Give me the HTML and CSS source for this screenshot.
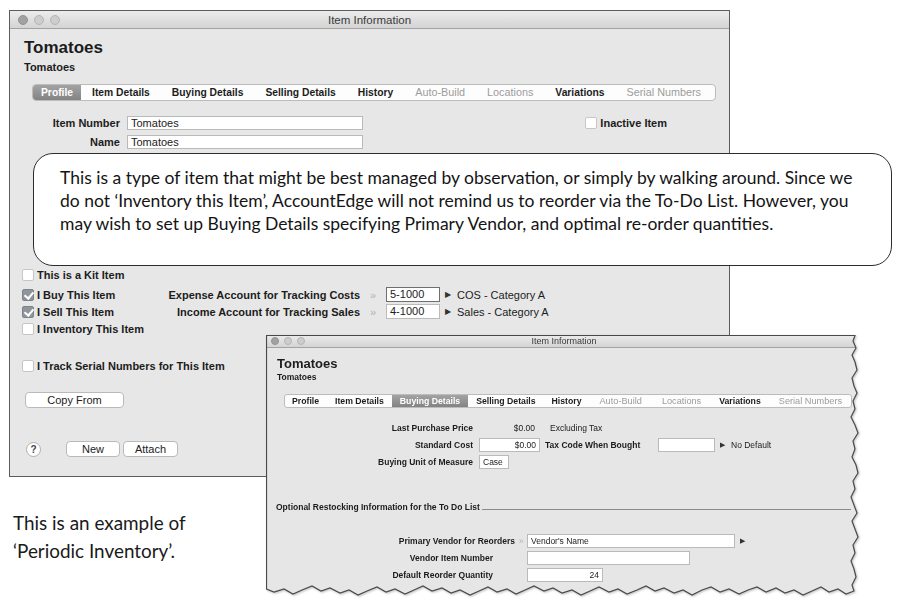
FILE: index.html
```html
<!DOCTYPE html>
<html lang="en">
<head>
    <meta charset="UTF-8">
    <title>Item Information</title>
    <link rel="stylesheet" href="styles.css">
</head>
<body>
<div class="page">
    <!--item window, profile tab-->
    <div class="win">
        <div class="titlebar">
            <div class="lights"><i></i><i></i><i></i></div>
            <div class="title">Item Information</div>
            <div></div>
        </div>
        <div class="win-body">
            <h1>Tomatoes</h1>
            <h2>Tomatoes</h2>
            <ul class="tabs">
                <li class="on">Profile</li>
                <li>Item Details</li>
                <li>Buying Details</li>
                <li>Selling Details</li>
                <li>History</li>
                <li class="off">Auto-Build</li>
                <li class="off">Locations</li>
                <li>Variations</li>
                <li class="off">Serial Numbers</li>
            </ul>
            <div class="id-row">
                <div class="id-fields">
                    <span class="lbl">Item Number</span><span class="field">Tomatoes</span>
                    <span class="lbl">Name</span><span class="field">Tomatoes</span>
                </div>
                <div class="check inactive"><i class="box"></i>Inactive Item</div>
            </div>
            <div class="flags">
                <div class="flag-row kit">
                    <div class="check"><i class="box"></i>This is a Kit Item</div>
                </div>
                <div class="flag-row">
                    <div class="check"><i class="box on"></i>I Buy This Item</div>
                    <span class="acct-lbl">Expense Account for Tracking Costs</span>
                    <span class="dbl">&raquo;</span>
                    <span class="field acct focus">5-1000</span>
                    <span class="tri">&#9654;</span>
                    <span class="acct-name">COS - Category A</span>
                </div>
                <div class="flag-row">
                    <div class="check"><i class="box on"></i>I Sell This Item</div>
                    <span class="acct-lbl">Income Account for Tracking Sales</span>
                    <span class="dbl">&raquo;</span>
                    <span class="field acct">4-1000</span>
                    <span class="tri">&#9654;</span>
                    <span class="acct-name">Sales - Category A</span>
                </div>
                <div class="flag-row">
                    <div class="check"><i class="box"></i>I Inventory This Item</div>
                </div>
                <div class="flag-row serial">
                    <div class="check wide"><i class="box"></i>I Track Serial Numbers for This Item</div>
                </div>
            </div>
            <div class="btn copy">Copy From</div>
            <div class="actions">
                <span class="help">?</span>
                <div class="btn new">New</div>
                <div class="btn attach">Attach</div>
            </div>
        </div>
    </div>

    <p class="caption">This is an example of<br>&lsquo;Periodic Inventory&rsquo;.</p>

    <!--note over the profile tab-->
    <div class="note">
        This is a type of item that might be best managed by observation, or simply by walking around. Since we<br>
        do not &lsquo;Inventory this Item&rsquo;, AccountEdge will not remind us to reorder via the To-Do List. However, you<br>
        may wish to set up Buying Details specifying Primary Vendor, and optimal re-order quantities.
    </div>

    <!--buying details tab, torn cut-out-->
    <div class="win2-wrap">
        <div class="win2">
            <div class="titlebar sm">
                <div class="lights"><i></i><i></i><i></i></div>
                <div class="title">Item Information</div>
                <div></div>
            </div>
            <div class="win2-body">
                <h1>Tomatoes</h1>
                <h2>Tomatoes</h2>
                <ul class="tabs sm">
                    <li>Profile</li>
                    <li>Item Details</li>
                    <li class="on">Buying Details</li>
                    <li>Selling Details</li>
                    <li>History</li>
                    <li class="off">Auto-Build</li>
                    <li class="off">Locations</li>
                    <li>Variations</li>
                    <li class="off">Serial Numbers</li>
                </ul>
                <div class="buy">
                    <div class="brow">
                        <span class="blbl">Last Purchase Price</span>
                        <span class="amt">$0.00</span>
                        <span class="note-txt">Excluding Tax</span>
                    </div>
                    <div class="brow">
                        <span class="blbl">Standard Cost</span>
                        <span class="field cost">$0.00</span>
                        <span class="tax-lbl">Tax Code When Bought</span>
                        <span class="field tax"></span>
                        <span class="tri">&#9654;</span>
                        <span>No Default</span>
                    </div>
                    <div class="brow">
                        <span class="blbl">Buying Unit of Measure</span>
                        <span class="field unit">Case</span>
                    </div>
                </div>
                <div class="restock">Optional Restocking Information for the To Do List</div>
                <div class="vend">
                    <div class="vrow">
                        <span class="vlbl">Primary Vendor for Reorders</span>
                        <span class="varr">&raquo;</span>
                        <span class="field vname">Vendor's Name</span>
                        <span class="tri">&#9654;</span>
                    </div>
                    <div class="vrow">
                        <span class="vlbl in">Vendor Item Number</span>
                        <span class="varr"></span>
                        <span class="field vnum"></span>
                    </div>
                    <div class="vrow">
                        <span class="vlbl in">Default Reorder Quantity</span>
                        <span class="varr"></span>
                        <span class="field qty">24</span>
                    </div>
                </div>
            </div>
        </div>
        <svg class="torn" width="596" height="264" viewBox="0 0 596 264">
            <polygon points="0.5,0.5 589,0.5 587,6 590,13 586,20 589,27 591,35 586,43 588,51 591,58 587,66 589,74 585,82 589,90 592,98 587,106 589,114 586,122 590,130 592,138 587,146 589,154 585,162 588,170 591,178 586,186 589,194 592,202 587,210 589,218 585,226 588,234 590,242 586,250 588,256 580,259 572,254 563,257 555,252 546,256 537,260 528,255 519,258 510,253 500,257 491,252 482,255 473,259 463,254 454,257 445,252 436,255 426,260 417,255 408,258 398,253 389,256 380,251 371,255 361,259 352,254 343,257 333,252 324,256 315,260 306,255 296,258 287,253 278,256 268,251 259,255 250,259 241,254 231,257 222,252 213,256 204,260 194,255 185,258 176,253 166,256 157,251 148,255 139,259 129,254 120,257 111,252 101,256 92,260 83,255 74,258 64,253 55,256 46,251 36,255 27,259 18,254 8,257 0.5,254"/>
        </svg>
    </div>
</div>
</body>
</html>
```

FILE: styles.css
```css
* {
    margin: 0;
    padding: 0;
    box-sizing: border-box;
}

body {
    background: #fff;
    font-family: "Liberation Sans", Arial, sans-serif;
    color: #1c1c1c;
}

.page {
    position: relative;
    width: 900px;
    height: 605px;
    overflow: hidden;
}

/*window frame*/
.win {
    margin: 10px 0 0 9px;
    width: 721px;
    height: 467px;
    border: 1px solid #5c5c5c;
    background: #e7e7e7;
}

.titlebar {
    display: grid;
    grid-template-columns: 1fr auto 1fr;
    align-items: center;
    height: 18px;
    background: linear-gradient(#ececec, #d4d4d4);
    border-bottom: 1px solid #a3a3a3;
}

.lights {
    display: flex;
    gap: 6px;
    padding-left: 8px;
}

.lights i {
    width: 10px;
    height: 10px;
    border-radius: 50%;
    background: #cdcdcd;
    border: 1px solid #b5b5b5;
}

.lights i:first-child {
    background: #a2a2a2;
    border-color: #939393;
}

.title {
    font-size: 11.5px;
    color: #3a3a3a;
}

.win-body {
    padding: 0 14px 0 12px;
}

h1 {
    font-size: 17px;
    line-height: 20px;
    margin: 9px 0 0 2px;
}

h2 {
    font-size: 11px;
    line-height: 13px;
    margin: 3px 0 0 2px;
}

/*tab strip*/
.tabs {
    display: flex;
    list-style: none;
    margin: 10px 0 0 10px;
    width: 684px;
    height: 17px;
    background: #fdfdfd;
    border: 1px solid #bcbcbc;
    border-radius: 4px;
    font-size: 10.3px;
    font-weight: bold;
}

.tabs li {
    padding: 0 11px;
    line-height: 15px;
    white-space: nowrap;
}

.tabs li.on {
    padding: 0 8px;
    background: linear-gradient(#a3a3a3, #838383);
    color: #fff;
    border-radius: 3px 0 0 3px;
}

.tabs li.off {
    color: #9c9c9c;
    font-weight: normal;
    font-size: 10.8px;
}

/*item number and name*/
.id-row {
    display: flex;
    align-items: flex-start;
    margin-top: 15px;
}

.id-fields {
    display: grid;
    grid-template-columns: 98px 236px;
    column-gap: 7px;
    row-gap: 5px;
}

.lbl {
    text-align: right;
    font-weight: bold;
    font-size: 11px;
    line-height: 14px;
}

.field {
    display: block;
    height: 14px;
    background: #fff;
    border: 1px solid #bababa;
    font-size: 11px;
    line-height: 12px;
    padding: 0 3px;
    white-space: nowrap;
}

.check {
    display: flex;
    align-items: center;
    gap: 3px;
    font-size: 11px;
    font-weight: bold;
    white-space: nowrap;
}

.box {
    position: relative;
    flex: none;
    width: 12px;
    height: 12px;
    background: #fff;
    border: 1px solid #c6c6c6;
    border-radius: 2px;
}

.box.on {
    background: #8f959c;
    border-color: #7e848a;
}

/*check mark*/
.box.on::after {
    content: "";
    position: absolute;
    left: 3px;
    top: 0;
    width: 4px;
    height: 7px;
    border: solid #fff;
    border-width: 0 2px 2px 0;
    transform: rotate(40deg);
}

.inactive {
    margin: 1px 48px 0 auto;
}

/*kit / buy / sell / inventory flags*/
.flags {
    margin-top: 117px;
}

.flag-row {
    display: flex;
    align-items: center;
    height: 17px;
    font-size: 11px;
    white-space: nowrap;
}

.flag-row.kit {
    margin-bottom: 3px;
}

.flag-row .check {
    width: 128px;
}

.flag-row .check.wide {
    width: auto;
}

.flag-row.serial {
    margin-top: 20px;
}

.acct-lbl {
    width: 210px;
    text-align: right;
    font-weight: bold;
}

.dbl {
    width: 26px;
    padding-left: 10px;
    color: #b2b2b2;
}

.acct {
    width: 54px;
    height: 15px;
    line-height: 13px;
}

.acct.focus {
    border-color: #6f6f6f;
}

.tri {
    font-size: 8px;
    margin: 0 6px 0 5px;
    color: #333;
}

/*buttons*/
.btn {
    display: flex;
    align-items: center;
    justify-content: center;
    height: 16px;
    background: #fff;
    border: 1px solid #bababa;
    border-radius: 4px;
    font-size: 11px;
    color: #222;
}

.copy {
    width: 99px;
    margin: 18px 0 0 3px;
}

.actions {
    display: flex;
    align-items: center;
    margin-top: 33px;
}

.help {
    display: flex;
    align-items: center;
    justify-content: center;
    width: 15px;
    height: 15px;
    margin-left: 4px;
    border-radius: 50%;
    border: 1px solid #b0b0b0;
    background: #fff;
    font-size: 10px;
    font-weight: bold;
    color: #444;
}

.new {
    width: 54px;
    margin-left: 25px;
}

.attach {
    width: 55px;
    margin-left: 3px;
}

.caption {
    margin: 32px 0 0 13px;
    font: 18.9px/28px Lato, sans-serif;
    color: #1a1a1a;
}

/*rounded note*/
.note {
    position: absolute;
    left: 33px;
    top: 153px;
    width: 859px;
    height: 113px;
    padding: 12px 0 0 26px;
    background: #fff;
    border: 1.5px solid #2c2c2c;
    border-radius: 20px;
    font: 17.5px/23px Lato, sans-serif;
    color: #141414;
    white-space: nowrap;
}

/*second window, torn edges*/
.win2-wrap {
    position: absolute;
    left: 266px;
    top: 335px;
    width: 596px;
    height: 264px;
    filter: drop-shadow(1px 1px 1px rgba(0, 0, 0, .25));
}

.win2 {
    width: 100%;
    height: 100%;
    background: #e6e6e6;
    font-size: 8.5px;
    clip-path: polygon(0 0, 589px 0, 587px 6px, 590px 13px, 586px 20px, 589px 27px, 591px 35px, 586px 43px, 588px 51px, 591px 58px, 587px 66px, 589px 74px, 585px 82px, 589px 90px, 592px 98px, 587px 106px, 589px 114px, 586px 122px, 590px 130px, 592px 138px, 587px 146px, 589px 154px, 585px 162px, 588px 170px, 591px 178px, 586px 186px, 589px 194px, 592px 202px, 587px 210px, 589px 218px, 585px 226px, 588px 234px, 590px 242px, 586px 250px, 588px 256px, 580px 259px, 572px 254px, 563px 257px, 555px 252px, 546px 256px, 537px 260px, 528px 255px, 519px 258px, 510px 253px, 500px 257px, 491px 252px, 482px 255px, 473px 259px, 463px 254px, 454px 257px, 445px 252px, 436px 255px, 426px 260px, 417px 255px, 408px 258px, 398px 253px, 389px 256px, 380px 251px, 371px 255px, 361px 259px, 352px 254px, 343px 257px, 333px 252px, 324px 256px, 315px 260px, 306px 255px, 296px 258px, 287px 253px, 278px 256px, 268px 251px, 259px 255px, 250px 259px, 241px 254px, 231px 257px, 222px 252px, 213px 256px, 204px 260px, 194px 255px, 185px 258px, 176px 253px, 166px 256px, 157px 251px, 148px 255px, 139px 259px, 129px 254px, 120px 257px, 111px 252px, 101px 256px, 92px 260px, 83px 255px, 74px 258px, 64px 253px, 55px 256px, 46px 251px, 36px 255px, 27px 259px, 18px 254px, 8px 257px, 0 254px);
}

.torn {
    position: absolute;
    left: 0;
    top: 0;
}

.torn polygon {
    fill: none;
    stroke: #4a4a4a;
    stroke-width: 1.2;
}

.titlebar.sm {
    height: 13px;
}

.titlebar.sm .lights {
    gap: 5px;
    padding-left: 5px;
}

.titlebar.sm .lights i {
    width: 8px;
    height: 8px;
}

.titlebar.sm .title {
    font-size: 9px;
}

.win2-body {
    padding: 0 11px;
}

.win2-body h1 {
    font-size: 13px;
    line-height: 16px;
    margin: 8px 0 0;
}

.win2-body h2 {
    font-size: 8.5px;
    line-height: 11px;
    margin: 0;
}

.tabs.sm {
    margin: 11px 0 0 7px;
    width: 568px;
    height: 14px;
    font-size: 8.7px;
    border-radius: 3px;
}

.tabs.sm li {
    padding: 0 8px;
    line-height: 12px;
}

.tabs.sm li:first-child {
    padding-left: 7px;
}

.tabs.sm li.on {
    border-radius: 0;
}

.tabs.sm li.off {
    padding: 0 10px;
    font-size: 9.2px;
}

.buy {
    display: flex;
    flex-direction: column;
    gap: 3px;
    margin-top: 13px;
}

.brow,
.vrow {
    display: flex;
    align-items: center;
    height: 14px;
    white-space: nowrap;
}

.blbl {
    width: 196px;
    margin-right: 6px;
    text-align: right;
    font-weight: bold;
}

.amt {
    width: 61px;
    padding-right: 5px;
    text-align: right;
}

.note-txt {
    margin-left: 10px;
}

.win2 .field {
    height: 14px;
    font-size: 8.5px;
    line-height: 12px;
}

.win2 .tri {
    font-size: 7px;
}

.cost {
    width: 61px;
    text-align: right;
}

.tax-lbl {
    width: 118px;
    padding-left: 5px;
    font-weight: bold;
}

.tax {
    width: 57px;
}

.unit {
    width: 30px;
}

.restock {
    display: flex;
    align-items: flex-end;
    margin: 32px 0 0 -1px;
    line-height: 12px;
    font-weight: bold;
    white-space: nowrap;
}

/*rule after the section title*/
.restock::after {
    content: "";
    flex: 1;
    margin: 0 0 3px 2px;
    border-bottom: 1px solid #8a8a8a;
}

.vend {
    display: flex;
    flex-direction: column;
    gap: 3px;
    margin-top: 21px;
}

.vlbl {
    width: 238px;
    text-align: right;
    font-weight: bold;
}

.vlbl.in {
    padding-right: 22px;
}

.varr {
    width: 12px;
    text-align: center;
    color: #b2b2b2;
}

.vname {
    width: 208px;
}

.vnum {
    width: 163px;
}

.qty {
    width: 76px;
    text-align: right;
}
```
